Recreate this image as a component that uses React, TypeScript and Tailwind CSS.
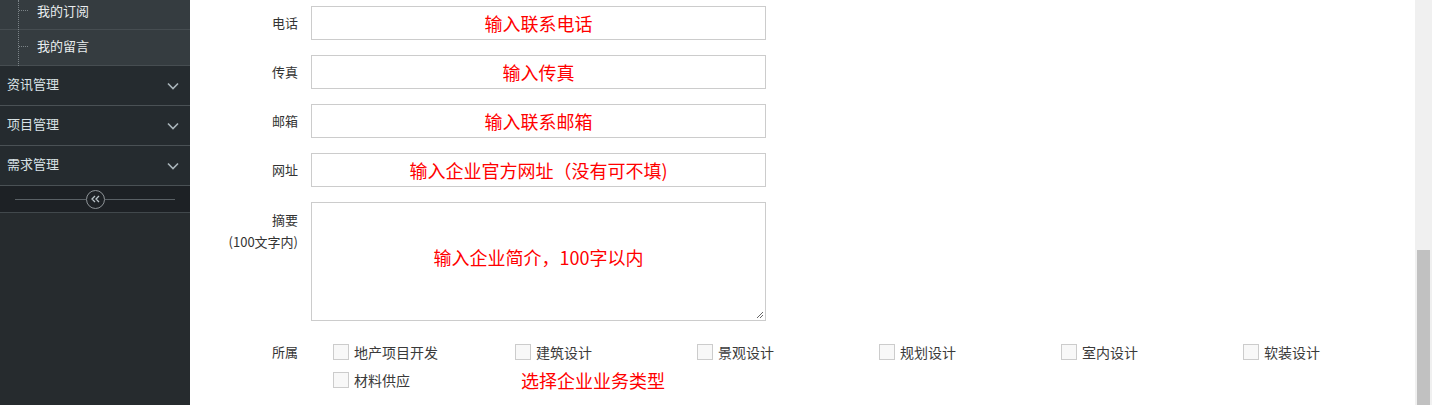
import React from 'react';

const font = { fontFamily: '"Noto Sans CJK SC", "Noto Sans", sans-serif' };

const subItems = ['我的订阅', '我的留言'];
const menuItems = ['资讯管理', '项目管理', '需求管理'];
const fields = [
  { label: '电话', hint: '输入联系电话' },
  { label: '传真', hint: '输入传真' },
  { label: '邮箱', hint: '输入联系邮箱' },
  { label: '网址', hint: '输入企业官方网址（没有可不填)' },
];
const types = ['地产项目开发', '建筑设计', '景观设计', '规划设计', '室内设计', '软装设计'];

function Chevron() {
  return (
    <svg width="12" height="8" viewBox="0 0 12 8" fill="none" className="text-[#a9b4ba]">
      <path d="M1 1.5 6 6.5 11 1.5" stroke="currentColor" strokeWidth="1.6" />
    </svg>
  );
}

function Checkbox({ label }: { label: string }) {
  return (
    <label className="flex items-center gap-[5px] h-[16px]">
      <span className="w-[16px] h-[16px] border border-[#cccccc] bg-[#f8f8f8]" />
      <span className="text-[14px] text-[#3a3a3a] leading-none">{label}</span>
    </label>
  );
}

function Sidebar() {
  return (
    <aside className="w-[190px] shrink-0 bg-[#262b2e] flex flex-col">
      <div className="relative bg-[#353c40]">
        <div className="absolute left-[18px] top-0 bottom-0 border-l border-dotted border-[#7b8387]" />
        {subItems.map((s, i) => (
          <div
            key={s}
            className={
              'flex items-center border-b border-[#464d51] ' + (i === 0 ? 'h-[30px] pb-[8px]' : 'h-[36px] pb-[3px]')
            }
          >
            <span className="ml-[19px] w-[9px] border-t border-dotted border-[#7b8387]" />
            <span className="ml-[9px] text-[13px] text-[#e8ecee]">{s}</span>
          </div>
        ))}
      </div>
      {menuItems.map((m) => (
        <div key={m} className="h-[40px] flex items-center justify-between pl-[7px] pr-[11px] bg-[#252b2f] border-b border-[#4a5155]">
          <span className="text-[13px] text-[#d9e2e6] pb-[4px]">{m}</span>
          <Chevron />
        </div>
      ))}
      <div className="h-[27px] bg-[#1d2125] border-b border-[#41484c] flex items-center px-[15px]">
        <div className="flex-1 border-t border-[#596065]" />
        <div className="w-[19px] h-[19px] rounded-full border border-[#8d9397] flex items-center justify-center">
          <svg width="9" height="8" viewBox="0 0 9 8" fill="none">
            <path d="M4 1 1 4l3 3M8 1 5 4l3 3" stroke="#b9c3c8" strokeWidth="1.3" />
          </svg>
        </div>
        <div className="flex-1 border-t border-[#596065]" />
      </div>
    </aside>
  );
}

export default function App() {
  return (
    <div className="w-[1440px] h-[405px] flex bg-white overflow-hidden" style={font}>
      <Sidebar />
      <main className="flex-1 min-w-0 overflow-hidden pt-[6px] flex flex-col gap-[15px]">
        {fields.map((f) => (
          <div key={f.label} className="flex items-center">
            <div className="w-[108px] shrink-0 text-right text-[13px] text-[#333]">{f.label}</div>
            <div className="ml-[13px] w-[455px] h-[34px] border border-[#cccccc] flex items-center justify-center text-[18px] text-[#ff0000]">
              {f.hint}
            </div>
          </div>
        ))}
        <div className="flex items-start">
          <div className="w-[108px] shrink-0 text-right text-[13px] text-[#333] pt-[7px] leading-[22px]">
            <div>摘要</div>
            <div>(100文字内)</div>
          </div>
          <div className="relative ml-[13px] w-[455px] h-[119px] border border-[#cccccc] flex items-center justify-center pb-[8px] text-[18px] text-[#ff0000]">
            输入企业简介，100字以内
            <svg className="absolute right-[1px] bottom-[1px]" width="9" height="9" viewBox="0 0 9 9">
              <path d="M8 2 2 8M8 5 5 8" stroke="#666" strokeWidth="1" />
            </svg>
          </div>
        </div>
        <div className="flex items-start mt-[8px]">
          <div className="w-[108px] shrink-0 text-right text-[13px] text-[#333] leading-[16px]">所属</div>
          <div className="ml-[35px] shrink-0 grid grid-cols-[repeat(6,182px)] gap-y-[12px]">
            {types.map((t) => (
              <Checkbox key={t} label={t} />
            ))}
            <Checkbox label="材料供应" />
            <div className="pl-[6px] h-[16px] flex items-center text-[18px] text-[#ff0000] whitespace-nowrap">
              选择企业业务类型
            </div>
          </div>
        </div>
      </main>
      <div className="w-[17px] shrink-0 bg-[#f0f0f0] flex flex-col justify-end">
        <div className="mx-[2px] h-[155px] bg-[#c1c1c1]" />
      </div>
      <div className="w-[8px] shrink-0" />
    </div>
  );
}
